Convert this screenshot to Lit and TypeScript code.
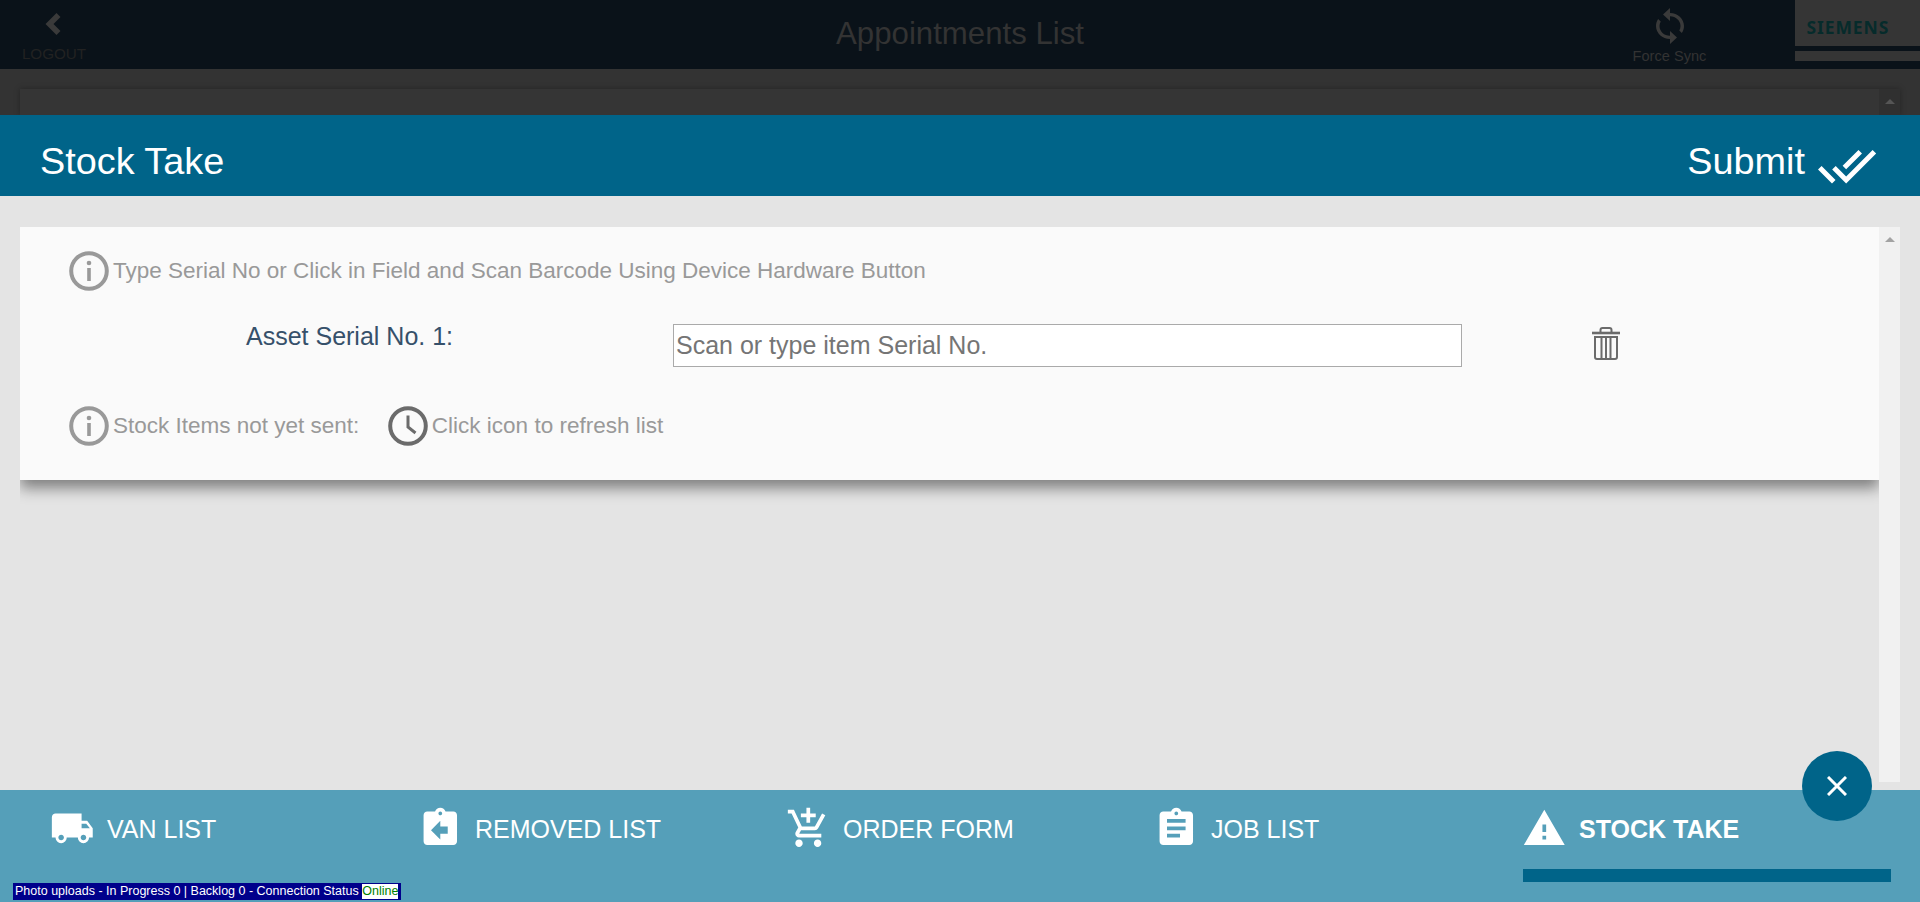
import { LitElement, html, css, svg } from 'lit';
import { customElement } from 'lit/decorators.js';

const icons = {
  truck: svg`<path d="M20 8h-3V4H3c-1.1 0-2 .9-2 2v11h2c0 1.66 1.34 3 3 3s3-1.34 3-3h6c0 1.66 1.34 3 3 3s3-1.34 3-3h2v-5l-3-4zM6 18.5c-.83 0-1.5-.67-1.5-1.5s.67-1.5 1.5-1.5 1.5.67 1.5 1.5-.67 1.5-1.5 1.5zm13.5-9l1.96 2.5H17V9.5h2.5zm-1.5 9c-.83 0-1.5-.67-1.5-1.5s.67-1.5 1.5-1.5 1.5.67 1.5 1.5-.67 1.5-1.5 1.5z"/>`,
  returned: svg`<path d="M19 3h-4.18C14.4 1.84 13.3 1 12 1c-1.3 0-2.4.84-2.82 2H5c-1.1 0-2 .9-2 2v14c0 1.1.9 2 2 2h14c1.1 0 2-.9 2-2V5c0-1.1-.9-2-2-2zm-7 0c.55 0 1 .45 1 1s-.45 1-1 1-1-.45-1-1 .45-1 1-1zm4 12h-4v3l-5-5 5-5v3h4v4z"/>`,
  cart: svg`<path d="M11 9h2V6h3V4h-3V1h-2v3H8v2h3v3zm-4 9c-1.1 0-1.99.9-1.99 2S5.9 22 7 22s2-.9 2-2-.9-2-2-2zm10 0c-1.1 0-1.99.9-1.99 2s.89 2 1.99 2 2-.9 2-2-.9-2-2-2zm-9.83-3.25l.03-.12.9-1.63h7.45c.75 0 1.41-.41 1.75-1.03l3.86-7.01L19.42 4h-.01l-1.1 2-2.76 5H8.53l-.13-.27L6.16 6l-.95-2-.94-2H1v2h2l3.6 7.59-1.35 2.45c-.16.28-.25.61-.25.96 0 1.1.9 2 2 2h12v-2H7.42c-.13 0-.25-.11-.25-.25z"/>`,
  job: svg`<path d="M19 3h-4.18C14.4 1.84 13.3 1 12 1c-1.3 0-2.4.84-2.82 2H5c-1.1 0-2 .9-2 2v14c0 1.1.9 2 2 2h14c1.1 0 2-.9 2-2V5c0-1.1-.9-2-2-2zm-7 0c.55 0 1 .45 1 1s-.45 1-1 1-1-.45-1-1 .45-1 1-1zm2 14H7v-2h7v2zm3-4H7v-2h10v2zm0-4H7V7h10v2z"/>`,
  warning: svg`<path d="M1 21h22L12 2 1 21zm12-3h-2v-2h2v2zm0-4h-2v-4h2v4z"/>`,
};

const tabs = [
  { icon: icons.truck, label: 'VAN LIST' },
  { icon: icons.returned, label: 'REMOVED LIST' },
  { icon: icons.cart, label: 'ORDER FORM' },
  { icon: icons.job, label: 'JOB LIST' },
  { icon: icons.warning, label: 'STOCK TAKE', active: true },
];

const infoIcon = html`<svg class="hint-icon" viewBox="0 0 40 40">
  <circle cx="20" cy="20" r="17.8" fill="none" stroke="#999" stroke-width="4"/>
  <rect x="18.2" y="17" width="3.6" height="13" fill="#999"/>
  <circle cx="20" cy="12" r="2.3" fill="#999"/>
</svg>`;

@customElement('app-root')
export class AppRoot extends LitElement {
  static styles = css`
    :host {
      display: block;
      height: 902px;
      position: relative;
      overflow: hidden;
      font-family: 'Liberation Sans', Arial, sans-serif;
      background: #e4e4e4;
    }
    .page {
      display: flex;
      flex-direction: column;
      height: 902px;
    }

    /* dimmed app behind the modal */
    .topbar {
      display: flex;
      height: 69px;
      flex: none;
      background: #0a1219;
    }
    .logout {
      width: 108px;
      display: flex;
      flex-direction: column;
      align-items: center;
      padding-top: 12px;
      box-sizing: border-box;
      color: #222;
      font-size: 15.2px;
    }
    .logout svg {
      display: block;
      width: 18px;
      height: 24px;
      margin-left: -2px;
      margin-bottom: 9px;
    }
    .title {
      width: 1524px;
      box-sizing: border-box;
      padding: 16px 0 0 180px;
      text-align: center;
      font-size: 31.2px;
      color: #333;
    }
    .sync {
      width: 75px;
      margin-right: 88px;
      display: flex;
      flex-direction: column;
      align-items: center;
      padding-top: 8px;
      box-sizing: border-box;
      color: #333;
      font-size: 14.6px;
      white-space: nowrap;
    }
    .sync svg {
      display: block;
      width: 28px;
      height: 36px;
      margin-bottom: 4px;
    }
    .logo {
      width: 125px;
    }
    .logo-top {
      height: 46px;
      background: #353535;
      box-sizing: border-box;
      padding: 16px 0 0 11.5px;
      color: #062b2b;
      font: bold 17.5px 'Noto Sans', sans-serif;
      line-height: 22px;
      letter-spacing: 0.9px;
    }
    .logo-strip {
      height: 10px;
      margin-top: 5px;
      background: #353535;
    }
    .band {
      height: 46px;
      flex: none;
      box-sizing: border-box;
      background: #333;
      padding: 20px 20px 0;
    }
    .band-card {
      display: flex;
      justify-content: flex-end;
      height: 26px;
      background: #353535;
      box-shadow: 0 0 6px rgba(0, 0, 0, 0.3);
    }
    .band-scroll {
      width: 21px;
      background: #303030;
    }

    /* modal */
    .head {
      height: 81px;
      flex: none;
      display: flex;
      justify-content: space-between;
      align-items: center;
      box-sizing: border-box;
      padding: 11px 43px 0 40px;
      background: #006489;
      color: #fff;
      font-size: 37.8px;
    }
    .submit {
      display: flex;
      align-items: center;
      gap: 12px;
    }
    .submit svg {
      width: 60px;
      height: 60px;
      fill: #fff;
      margin-top: 10px;
    }
    .content {
      flex: 1;
      min-height: 0;
      box-sizing: border-box;
      padding: 31px 20px 8px;
    }
    .scroller {
      display: flex;
      height: 100%;
      align-items: flex-start;
      overflow: hidden;
      background: #e4e4e4;
    }
    .card {
      flex: 1;
      height: 253px;
      box-sizing: border-box;
      padding-top: 24px;
      background: #fafafa;
      box-shadow: 0 8px 14px rgba(0, 0, 0, 0.45);
    }
    .track {
      position: relative;
      width: 21px;
      height: 100%;
      background: #f1f1f1;
      display: flex;
      justify-content: center;
      padding-top: 10px;
      box-sizing: border-box;
    }
    .arrow {
      width: 0;
      height: 0;
      border: 5px solid transparent;
      border-top: 0;
      border-bottom: 5px solid #a3a3a3;
    }
    .band-scroll .arrow {
      margin: 10px auto 0;
      border-bottom-color: #555;
    }
    .hint {
      display: flex;
      align-items: center;
      gap: 4px;
      padding-left: 49px;
      font-size: 22.5px;
      color: #999;
    }
    .hint-icon {
      display: block;
      width: 40px;
      height: 40px;
      flex: none;
    }
    .clock {
      margin-left: 24.5px;
    }
    .asset {
      display: grid;
      grid-template-columns: 427px 789px 28px;
      margin: 33px 0 39px;
      padding-left: 226px;
      font-size: 25px;
      color: #36506a;
    }
    .asset label {
      margin-top: -2px;
      line-height: 29px;
    }
    .asset input {
      width: 100%;
      height: 43px;
      box-sizing: border-box;
      margin: 0;
      padding: 0 2px;
      border: 1px solid #aaa;
      background: #fff;
      font: 25px 'Liberation Sans', Arial, sans-serif;
      outline: none;
    }
    .asset input::placeholder {
      color: #757575;
    }
    .trash {
      display: block;
      width: 28px;
      height: 33px;
      margin: 3px 0 0 130px;
    }

    /* bottom tabs */
    .tabs {
      height: 112px;
      flex: none;
      display: flex;
      box-sizing: border-box;
      padding-left: 51px;
      background: #559fb9;
      color: #fff;
      font-size: 25px;
    }
    .tab {
      width: 368px;
      height: 92px;
      box-sizing: border-box;
      flex: none;
      display: flex;
      align-items: flex-start;
      padding-top: 16px;
    }
    .tab svg {
      width: 44.6px;
      height: 44.6px;
      flex: none;
      fill: #fff;
      margin: 0 12.4px 0 -1px;
    }
    .tab span {
      line-height: 46px;
    }
    .tab.active {
      font-weight: bold;
      border-bottom: 13px solid #006489;
    }
    .status {
      position: absolute;
      left: 13px;
      top: 883px;
      display: flex;
      height: 17px;
      box-sizing: border-box;
      padding: 1px 3px 1px 2px;
      background: #00008b;
      color: #fff;
      font-size: 12.5px;
      line-height: 15px;
      white-space: pre;
    }
    .online {
      background: #fff;
      color: #008000;
    }
    .close {
      position: absolute;
      left: 1802px;
      top: 751px;
      width: 70px;
      height: 70px;
      display: flex;
      align-items: center;
      justify-content: center;
      border-radius: 50%;
      background: #006489;
    }
    .close svg {
      display: block;
      width: 20px;
      height: 20px;
    }
  `;

  render() {
    return html`
      <div class="page">
        <div class="topbar">
          <div class="logout">
            <svg viewBox="0 0 18 24"><path d="M12.5 1 L16.5 5 L9.5 12 L16.5 19 L12.5 23 L1.5 12 Z" fill="#3a3a3a"/></svg>
            LOGOUT
          </div>
          <div class="title">Appointments List</div>
          <div class="sync">
            <svg viewBox="4 1 16 22" preserveAspectRatio="none"><path fill="#3a3a3a" d="M12 4V1L8 5l4 4V6c3.31 0 6 2.69 6 6 0 1.01-.25 1.97-.7 2.8l1.46 1.46C19.54 15.03 20 13.57 20 12c0-4.42-3.58-8-8-8zm0 14c-3.31 0-6-2.69-6-6 0-1.01.25-1.97.7-2.8L5.24 7.74C4.46 8.97 4 10.43 4 12c0 4.42 3.58 8 8 8v3l4-4-4-4v3z"/></svg>
            Force Sync
          </div>
          <div class="logo">
            <div class="logo-top">SIEMENS</div>
            <div class="logo-strip"></div>
          </div>
        </div>
        <div class="band">
          <div class="band-card">
            <div class="band-scroll"><div class="arrow"></div></div>
          </div>
        </div>

        <div class="head">
          <div>Stock Take</div>
          <div class="submit">
            Submit
            <svg viewBox="0 0 24 24"><path d="M18 7l-1.41-1.41-6.34 6.34 1.41 1.41L18 7zm4.24-1.41L11.66 16.17 7.48 12l-1.41 1.41L11.66 19l12-12-1.42-1.41zM.41 13.41L6 19l1.41-1.41L1.83 12 .41 13.41z"/></svg>
          </div>
        </div>

        <div class="content">
          <div class="scroller">
            <div class="card">
              <div class="hint">${infoIcon}<span>Type Serial No or Click in Field and Scan Barcode Using Device Hardware Button</span></div>
              <div class="asset">
                <label>Asset Serial No. 1:</label>
                <input type="text" placeholder="Scan or type item Serial No." />
                <svg class="trash" viewBox="0 0 28 33" fill="none" stroke="#6b6b6b" stroke-width="2">
                  <path d="M0 6h28" stroke-width="2.6"/>
                  <path d="M8.5 5V3a2 2 0 0 1 2-2h7a2 2 0 0 1 2 2v2"/>
                  <path d="M3 10h22v20a2 2 0 0 1-2 2H5a2 2 0 0 1-2-2z"/>
                  <path d="M9.5 10v22M14 10v22M18.5 10v22"/>
                </svg>
              </div>
              <div class="hint">
                ${infoIcon}<span>Stock Items not yet sent:</span>
                <svg class="hint-icon clock" viewBox="0 0 40 40" fill="none" stroke="#6b6b6b">
                  <circle cx="20" cy="20" r="17.8" stroke-width="4"/>
                  <path d="M20 9.5V21l7.5 6" stroke-width="3"/>
                </svg>
                <span>Click icon to refresh list</span>
              </div>
            </div>
            <div class="track"><div class="arrow"></div></div>
          </div>
        </div>

        <div class="tabs">
          ${tabs.map(
            (t) => html`<div class="tab ${t.active ? 'active' : ''}">
              <svg viewBox="0 0 24 24">${t.icon}</svg><span>${t.label}</span>
            </div>`
          )}
        </div>
      </div>

      <div class="status">Photo uploads - In Progress 0 | Backlog 0 - Connection Status <span class="online">Online</span></div>
      <div class="close">
        <svg viewBox="0 0 20 20" stroke="#fff" stroke-width="3"><path d="M1 1l18 18M19 1L1 19"/></svg>
      </div>
    `;
  }
}
